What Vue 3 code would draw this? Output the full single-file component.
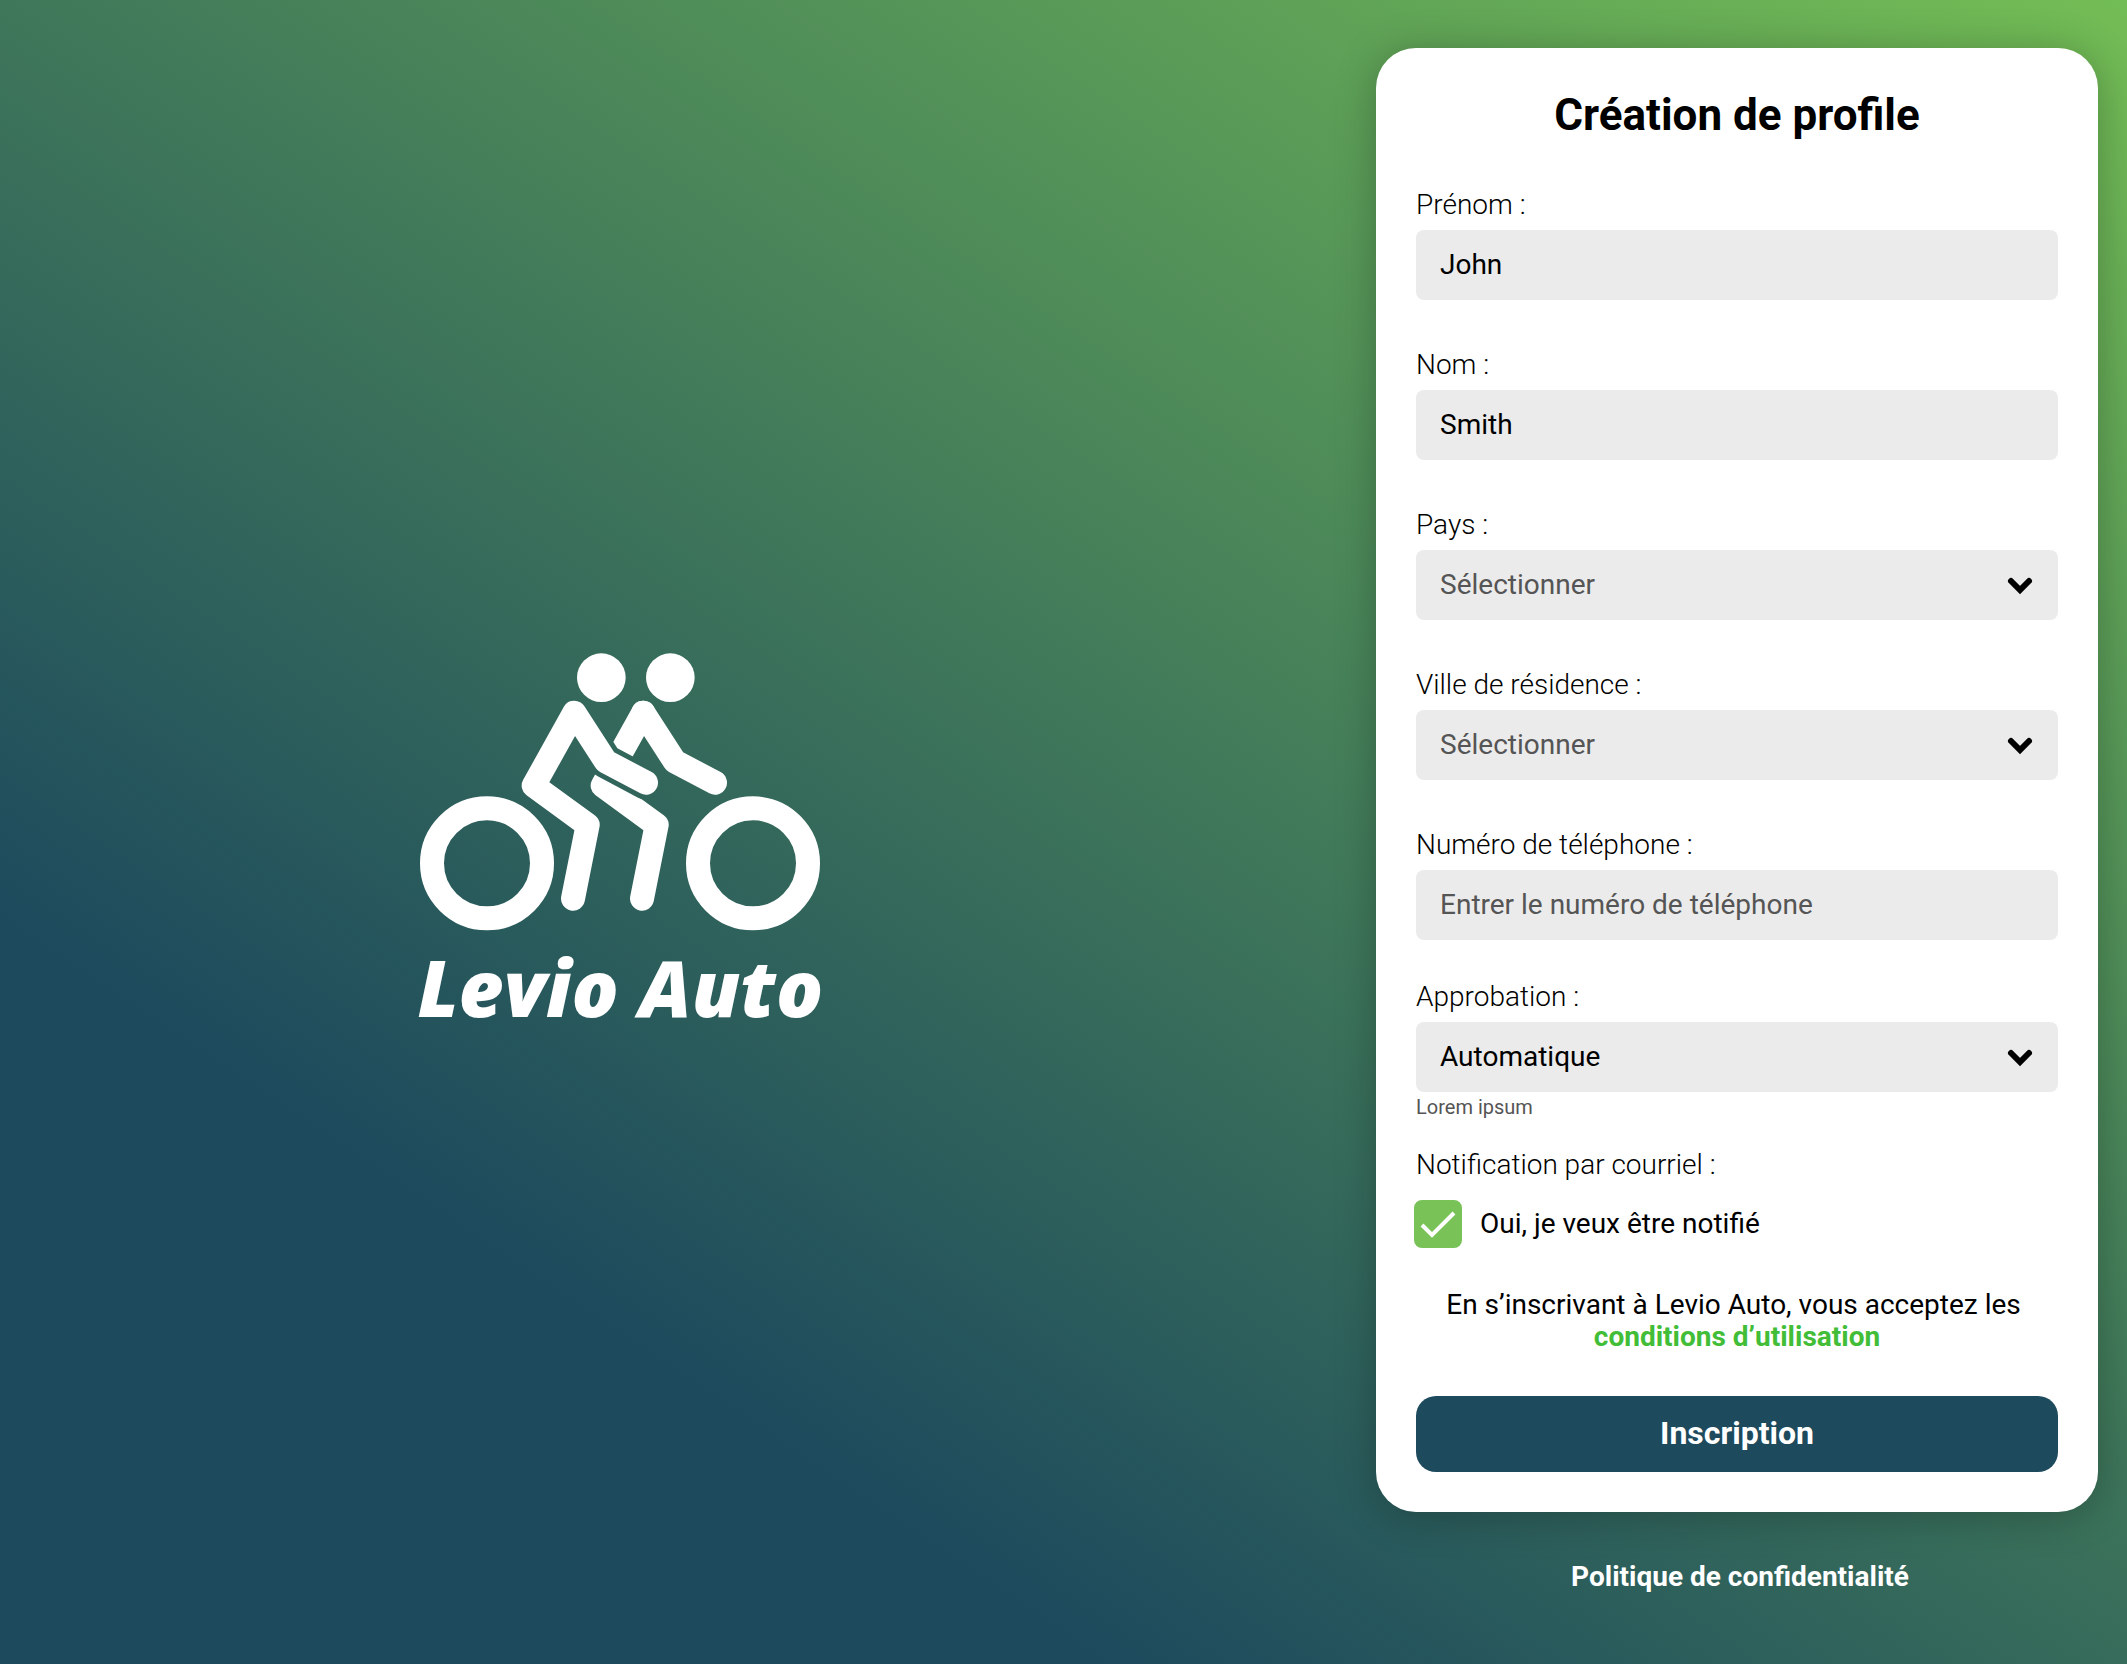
<script setup>
import { reactive } from 'vue'

const form = reactive({
  firstName: 'John',
  lastName: 'Smith',
  country: '',
  city: '',
  phone: '',
  approval: 'auto',
  notify: true
})
</script>

<template>
  <main class="page">
    <section class="brand">
      <svg class="brand-mark" viewBox="30 39 1200 834" aria-hidden="true">
        <defs>
          <mask id="arm-gap" maskUnits="userSpaceOnUse" x="0" y="0" width="1260" height="900">
            <rect width="1260" height="900" fill="#fff" />
            <path d="M493 218 587 364 708 428" fill="none" stroke="#000" stroke-width="102" stroke-linecap="round" stroke-linejoin="round" />
          </mask>
        </defs>
        <g fill="#fff">
          <circle cx="574" cy="113" r="73" />
          <circle cx="781" cy="113" r="73" />
        </g>
        <g fill="none" stroke="#fff" stroke-width="72" stroke-linecap="round" stroke-linejoin="round">
          <circle cx="231" cy="670" r="165" />
          <circle cx="1029" cy="670" r="165" />
          <path d="M489 776 533 555 371 437 493 218 587 364 708 428" />
          <path d="M700 218 794 364 915 428" />
          <path mask="url(#arm-gap)" d="M696 776 740 555 578 437 700 218" />
        </g>
      </svg>
      <p class="brand-name">Levio Auto</p>
    </section>

    <section class="side">
      <form class="card" @submit.prevent>
        <h1 class="title">Création de profile</h1>

        <div class="fields">
          <div class="field">
            <label class="label" for="first-name">Prénom :</label>
            <input id="first-name" v-model="form.firstName" class="control" type="text" />
          </div>
          <div class="field">
            <label class="label" for="last-name">Nom :</label>
            <input id="last-name" v-model="form.lastName" class="control" type="text" />
          </div>
          <div class="field">
            <label class="label" for="country">Pays :</label>
            <div class="select">
              <select id="country" v-model="form.country" class="control" :class="{ empty: !form.country }">
                <option value="">Sélectionner</option>
              </select>
              <svg class="chevron" viewBox="0 0 24 16" aria-hidden="true"><path d="M3 3 12 12 21 3" /></svg>
            </div>
          </div>
          <div class="field">
            <label class="label" for="city">Ville de résidence :</label>
            <div class="select">
              <select id="city" v-model="form.city" class="control" :class="{ empty: !form.city }">
                <option value="">Sélectionner</option>
              </select>
              <svg class="chevron" viewBox="0 0 24 16" aria-hidden="true"><path d="M3 3 12 12 21 3" /></svg>
            </div>
          </div>
          <div class="field">
            <label class="label" for="phone">Numéro de téléphone :</label>
            <input id="phone" v-model="form.phone" class="control" type="tel" placeholder="Entrer le numéro de téléphone" />
          </div>
        </div>

        <div class="field approval">
          <label class="label" for="approval">Approbation :</label>
          <div class="select">
            <select id="approval" v-model="form.approval" class="control" aria-describedby="approval-hint">
              <option value="auto">Automatique</option>
            </select>
            <svg class="chevron" viewBox="0 0 24 16" aria-hidden="true"><path d="M3 3 12 12 21 3" /></svg>
          </div>
          <p id="approval-hint" class="hint">Lorem ipsum</p>
        </div>

        <fieldset class="notify">
          <legend class="label">Notification par courriel :</legend>
          <label class="check">
            <span class="check-box">
              <input v-model="form.notify" type="checkbox" />
              <svg v-if="form.notify" viewBox="0 0 48 48" aria-hidden="true"><path d="M8 25 18 35 40 13" /></svg>
            </span>
            <span>Oui, je veux être notifié</span>
          </label>
        </fieldset>

        <p class="terms">
          En s’inscrivant à Levio Auto, vous acceptez les&nbsp;<br />
          <a href="#conditions">conditions d’utilisation</a>
        </p>

        <button class="submit" type="submit">Inscription</button>
      </form>

      <a class="privacy" href="#confidentialite">Politique de confidentialité</a>
    </section>
  </main>
</template>

<style>
body {
  margin: 0;
}
</style>

<style scoped>
.page {
  display: grid;
  grid-template-columns: 7fr 5fr;
  box-sizing: border-box;
  min-height: 100vh;
  background: linear-gradient(34deg, #1d4a5d 24%, #73bd55);
  color: #000;
  font-family: Roboto, "Liberation Sans", sans-serif;
  font-size: 28px;
  line-height: 34px;
}

.brand {
  display: flex;
  flex-direction: column;
  align-items: center;
  justify-content: center;
  gap: 24px;
  padding-top: 8px;
}

.brand-mark {
  width: 400px;
  height: 278px;
}

.brand-name {
  margin: 0;
  color: #fff;
  font-family: "Open Sans", "Noto Sans", sans-serif;
  font-size: 78px;
  font-style: italic;
  font-weight: 800;
  line-height: 64px;
  white-space: nowrap;
}

.side {
  display: flex;
  flex-direction: column;
  align-items: flex-end;
  gap: 48px;
  padding: 48px 29px 48px 0;
}

.card {
  box-sizing: border-box;
  width: 100%;
  max-width: 722px;
  padding: 40px;
  border-radius: 40px;
  background: #fff;
  box-shadow: 0 4px 40px rgba(0, 0, 0, 0.25);
}

.title {
  margin: 0 0 46px;
  font-size: 44px;
  font-weight: 700;
  line-height: 54px;
  text-align: center;
}

.fields {
  display: flex;
  flex-direction: column;
  gap: 48px;
}

.label {
  display: block;
  margin-bottom: 8px;
  padding: 0;
  font-weight: 300;
}

.control {
  display: block;
  box-sizing: border-box;
  width: 100%;
  height: 70px;
  padding: 0 24px;
  border: 0;
  border-radius: 8px;
  background: #ebebeb;
  color: #000;
  font: inherit;
  appearance: none;
}

input.control {
  padding-bottom: 2px;
}

.control::placeholder {
  color: #555;
  opacity: 1;
}

.control.empty {
  color: #555;
}

.select {
  position: relative;
}

.chevron {
  position: absolute;
  top: 28px;
  right: 26px;
  width: 24px;
  height: 16px;
  overflow: visible;
  fill: none;
  stroke: #000;
  stroke-width: 6px;
  stroke-linecap: round;
  pointer-events: none;
}

.approval {
  margin-top: 40px;
}

.hint {
  margin: 4px 0 0;
  color: #555;
  font-size: 20px;
  line-height: 22px;
}

.notify {
  margin: 30px 0 0;
  padding: 0;
  border: 0;
}

.check {
  display: flex;
  align-items: center;
  gap: 18px;
  margin: 18px 0 0 -2px;
}

.check-box {
  position: relative;
  display: flex;
}

.check-box input {
  width: 48px;
  height: 48px;
  margin: 0;
  border: 2px solid #78c257;
  border-radius: 8px;
  appearance: none;
}

.check-box input:checked {
  background: #78c257;
}

.check-box svg {
  position: absolute;
  inset: 0;
  fill: none;
  stroke: #fff;
  stroke-width: 4px;
  pointer-events: none;
}

.notify .label {
  margin-bottom: 0;
}

.terms {
  margin: 41px 0 43px;
  line-height: 32px;
  text-align: center;
}

.terms a {
  color: #42bd37;
  font-weight: 700;
  text-decoration: none;
}

.submit {
  display: block;
  width: 100%;
  height: 76px;
  padding: 0 0 2px;
  border: 0;
  border-radius: 20px;
  background: #1d4a5d;
  color: #fff;
  font: 700 32px/38px Roboto, "Liberation Sans", sans-serif;
}

.privacy {
  width: 100%;
  max-width: 716px;
  color: #fff;
  font-weight: 700;
  text-align: center;
  text-decoration: none;
}
</style>
